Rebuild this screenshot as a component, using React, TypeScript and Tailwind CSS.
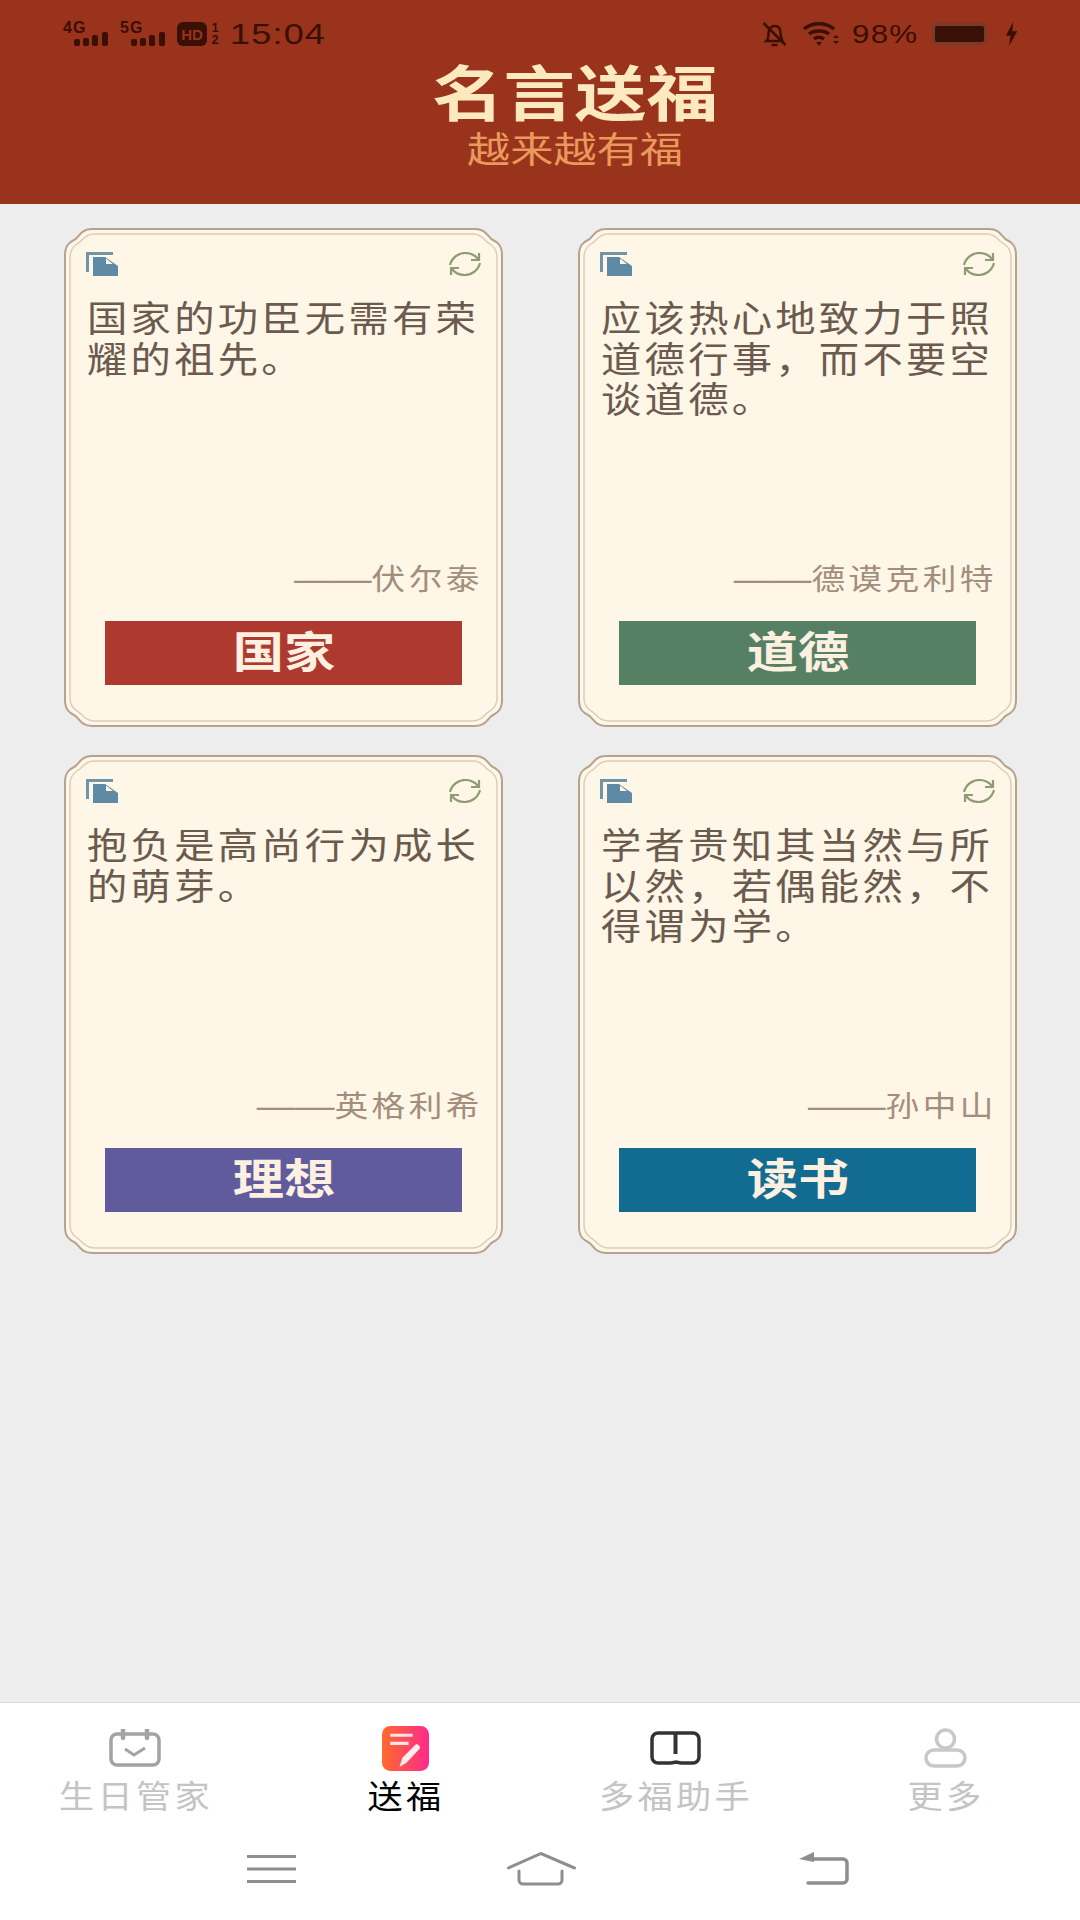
import React from 'react';

const cjk = "font-['Liberation_Sans','Noto_Sans_CJK_SC',sans-serif]";

interface Quote {
  text: string;
  author: string;
  tag: string;
  tagClass: string;
}

const quotes: Quote[] = [
  { text: '国家的功臣无需有荣耀的祖先。', author: '伏尔泰', tag: '国家', tagClass: 'bg-[#ae392f]' },
  { text: '应该热心地致力于照道德行事，而不要空谈道德。', author: '德谟克利特', tag: '道德', tagClass: 'bg-[#558063]' },
  { text: '抱负是高尚行为成长的萌芽。', author: '英格利希', tag: '理想', tagClass: 'bg-[#5f5b9d]' },
  { text: '学者贵知其当然与所以然，若偶能然，不得谓为学。', author: '孙中山', tag: '读书', tagClass: 'bg-[#126c92]' },
];

// Card outline with the little stepped corners
const outerFrame =
  'M1 27C1 17 6 14 10 12C15 10 16 1 28 1H411C423 1 424 10 429 12C433 14 438 17 438 27V472C438 482 433 485 429 487C424 489 423 498 411 498H28C16 498 15 489 10 487C6 485 1 482 1 472Z';
const innerFrame =
  'M6 29C6 21 10 18 13 16C18 14 20 6 30 6H409C419 6 421 14 426 16C429 18 433 21 433 29V470C433 478 429 481 426 483C421 485 419 493 409 493H30C20 493 18 485 13 483C10 481 6 478 6 470Z';

const CardFrame = () => (
  <svg className="absolute inset-0" width="439" height="499" viewBox="0 0 439 499">
    <path d={outerFrame} fill="#fef6e7" stroke="#b5a28f" strokeWidth="2" />
    <path d={innerFrame} fill="none" stroke="#dccdba" strokeWidth="1.500" />
  </svg>
);

const CopyIcon = () => (
  <svg width="32" height="24" viewBox="0 0 32 24">
    <path d="M1.500 20V1.500H27" fill="none" stroke="#7393a6" strokeWidth="3" />
    <path d="M7 5H19L32 14V24H7z" fill="#5f8aa5" />
    <path d="M20 6.500L27 12H20z" fill="#fef6e7" />
  </svg>
);

const RefreshIcon = () => (
  <svg width="32" height="24" viewBox="0 0 32 24" fill="none" stroke="#8f9c72" strokeWidth="2.200">
    <path d="M1 13C3 5 10 1 16 1C21 1 26 3 29 7" />
    <path d="M30 1V8H22" />
    <path d="M31 11C29 19 22 23 16 23C11 23 6 21 3 17" />
    <path d="M2 23V16H10" />
  </svg>
);

const QuoteCard = ({ quote }: { quote: Quote }) => (
  <div className="relative h-[499px] w-[439px]">
    <CardFrame />
    <div className="relative flex h-full flex-col px-[22px] pt-[24px]">
      <div className="flex h-[24px] items-center justify-between">
        <CopyIcon />
        <RefreshIcon />
      </div>
      <p className="ml-[1px] mt-[24px] h-[260px] w-[355px] origin-left scale-x-[1.120] text-[36px] leading-[40.500px] tracking-[2.900px] text-[#6b5a4e]">{quote.text}</p>
      <p className="-mr-[2px] origin-right scale-x-[1.160] whitespace-nowrap text-right text-[29px] leading-[40px] tracking-[3px] text-[#a38d7b]">
        <span className="text-[33.500px] leading-none tracking-normal">——</span>
        {quote.author}
      </p>
      <div className={`mx-[19px] mt-[21px] flex h-[64px] items-center justify-center ${quote.tagClass}`}>
        <span className="block scale-x-[1.190] text-[43px] font-bold leading-none text-[#fdf0e0]">{quote.tag}</span>
      </div>
    </div>
  </div>
);

const SignalBars = () => (
  <svg width="36" height="14" viewBox="0 0 36 14" fill="#3a0f06">
    <rect x="0" y="7" width="6" height="7" rx="2" />
    <rect x="9" y="6" width="6" height="8" rx="2" />
    <rect x="18" y="3" width="6" height="11" rx="2" />
    <rect x="28" y="0" width="6" height="14" rx="2" />
  </svg>
);

const Network = ({ label }: { label: string }) => (
  <div className="relative h-[24px] w-[47px]">
    <span className="absolute left-0 top-0 text-[16px] font-bold leading-[12px] tracking-[1px] text-[#3a0f06]">{label}</span>
    <span className="absolute bottom-0 right-0 flex"><SignalBars /></span>
  </div>
);

const StatusBar = () => (
  <div className="flex h-[48px] items-center justify-between pl-[63px] pr-[62px] pt-[20px] text-[#3a0f06]">
    <div className="flex items-center">
      <Network label="4G" />
      <div className="ml-[10px]"><Network label="5G" /></div>
      <div className="ml-[10px] flex h-[24px] w-[30px] items-center justify-center rounded-[6px] bg-[#3a0f06] text-[15px] font-bold leading-none text-[#9a3319]">HD</div>
      <div className="ml-[3px] flex w-[10px] flex-col text-center text-[13px] font-bold leading-[12px]">
        <span>1</span>
        <span>2</span>
      </div>
      <div className="ml-[10px] w-[97px]">
        <span className="block origin-left scale-x-[1.200] whitespace-nowrap text-[30px] leading-[32px] tracking-[1px]">15:04</span>
      </div>
    </div>
    <div className="flex items-center">
      <svg width="27" height="26" viewBox="0 0 26 26" fill="none" stroke="#3a0f06" strokeWidth="2.500">
        <path d="M5 20c2-2 2-4 2-8 0-4 3-7 6-7 4 0 6 3 6 7 0 4 1 6 2 8z" />
        <path d="M10 24h6" />
        <path d="M2 2l22 22" />
      </svg>
      <svg className="ml-[14px]" width="38" height="26" viewBox="0 0 38 26" fill="none" stroke="#3a0f06" strokeWidth="3.500">
        <path d="M2 8c8-7 22-7 30 0" />
        <path d="M7 13c5-4 15-4 20 0" />
        <path d="M12 18c3-2 7-2 10 0" />
        <path d="M14 21l3 4 3-4z" fill="#3a0f06" stroke="none" />
        <path d="M31 17l3-3 3 3zM31 20l3 3 3-3z" fill="#3a0f06" stroke="none" />
      </svg>
      <div className="ml-[12px] w-[64px]">
        <span className="block origin-left scale-x-[1.250] whitespace-nowrap text-[25px] leading-[32px] tracking-[1px]">98%</span>
      </div>
      <div className="ml-[16px] h-[22px] w-[55px] rounded-[5px] border-[3px] border-[#7a3a2a] bg-[#3a0f06]" />
      <svg className="ml-[18px]" width="13" height="24" viewBox="0 0 16 26" fill="#3a0f06" preserveAspectRatio="none">
        <path d="M10 0L1 15h6l-2 11 10-16H9z" />
      </svg>
    </div>
  </div>
);

const TabIcon = ({ name }: { name: string }) => {
  if (name === 'birthday') {
    return (
      <svg width="52" height="38" viewBox="0 0 52 38" fill="none" stroke="#a3a3a3" strokeWidth="3.500">
        <rect x="2" y="5" width="48" height="31" rx="6" />
        <path d="M14 1v8M38 1v8" strokeLinecap="round" strokeWidth="4.500" />
        <path d="M16 20l9 6 11-7" strokeWidth="3" />
      </svg>
    );
  }
  if (name === 'gift') {
    return (
      <svg width="47" height="45" viewBox="0 0 46 44">
        <defs>
          <linearGradient id="tabGift" x1="0" y1="0" x2="1" y2="0">
            <stop offset="0" stopColor="#ff6a2c" />
            <stop offset="1" stopColor="#ff2a8c" />
          </linearGradient>
        </defs>
        <rect width="46" height="44" rx="8" fill="url(#tabGift)" />
        <path d="M8 9h22M8 17h18" stroke="#fff" strokeWidth="3" opacity="0.85" />
        <path d="M17 40l3-9 13-13c2-1 5 2 4 4L24 36z" fill="#fff" opacity="0.9" />
      </svg>
    );
  }
  if (name === 'book') {
    return (
      <svg width="51" height="34" viewBox="0 0 51 34" fill="none" stroke="#333" strokeWidth="3.500">
        <path d="M8 2h35a6 6 0 0 1 6 6v18a6 6 0 0 1-6 6H31l-5-1-5 1H8a6 6 0 0 1-6-6V8a6 6 0 0 1 6-6z" />
        <path d="M25.500 2v21" strokeWidth="4" />
      </svg>
    );
  }
  return (
    <svg width="43" height="40" viewBox="0 0 43 40" fill="none" stroke="#c8c8c8" strokeWidth="3.500">
      <circle cx="21.500" cy="11" r="9" />
      <rect x="2" y="22" width="39" height="16" rx="8" />
    </svg>
  );
};

const tabs = [
  { icon: 'birthday', label: '生日管家', active: false },
  { icon: 'gift', label: '送福', active: true },
  { icon: 'book', label: '多福助手', active: false },
  { icon: 'more', label: '更多', active: false },
];

export default function App() {
  return (
    <div className={`flex h-[1920px] w-[1080px] flex-col overflow-hidden bg-[#ededed] ${cjk}`}>
      <header className="flex h-[204px] flex-col bg-[#99331b]">
        <StatusBar />
        <div className="flex flex-col items-center pl-[70px]">
          <h1 className="mt-[16px] scale-x-[1.190] text-[60px] font-bold leading-[64px] text-[#fde9bf]">名言送福</h1>
          <p className="mt-[3px] scale-x-[1.200] text-[36px] leading-[40px] text-[#e9995c]">越来越有福</p>
        </div>
      </header>

      <main className="grid flex-1 content-start gap-x-[75px] gap-y-[28px] pl-[64px] pt-[24px] [grid-template-columns:439px_439px]">
        {quotes.map((q) => (
          <QuoteCard key={q.tag} quote={q} />
        ))}
      </main>

      <footer className="h-[218px] border-t border-[#dcdcdc] bg-white">
        <nav className="grid h-[122px] grid-cols-4 pt-[22px]">
          {tabs.map((t) => (
            <div key={t.label} className="flex flex-col items-center">
              <div className="flex h-[46px] items-center justify-center"><TabIcon name={t.icon} /></div>
              <span className={`ml-[3px] mt-[8px] scale-x-[1.100] text-[32px] leading-[36px] tracking-[3px] ${t.active ? 'text-black' : 'text-[#c4c4c4]'}`}>{t.label}</span>
            </div>
          ))}
        </nav>
        {/* Android system buttons */}
        <div className="flex items-start pl-[247px] pt-[27px]">
          <svg className="mt-[3px]" width="49" height="28" viewBox="0 0 49 28" stroke="#8e8e8e" strokeWidth="3">
            <path d="M0 1.500h49M0 14h49M0 26.500h49" />
          </svg>
          <svg className="ml-[211px]" width="69" height="34" viewBox="0 0 69 34" fill="none" stroke="#8e8e8e" strokeWidth="3" strokeLinecap="round">
            <path d="M1.500 16L34 1.500 67.500 16" />
            <path d="M12 19v9a4 4 0 0 0 4 4h35a4 4 0 0 0 4-4v-9" />
          </svg>
          <svg className="ml-[223px]" width="50" height="33" viewBox="0 0 50 33" fill="none" stroke="#8e8e8e" strokeWidth="3.500" strokeLinecap="round">
            <path d="M12 7h32a4 4 0 0 1 4 4v16a4 4 0 0 1-4 4H9" />
            <path d="M0 7l15-7v10z" fill="#8e8e8e" stroke="none" />
          </svg>
        </div>
      </footer>
    </div>
  );
}
